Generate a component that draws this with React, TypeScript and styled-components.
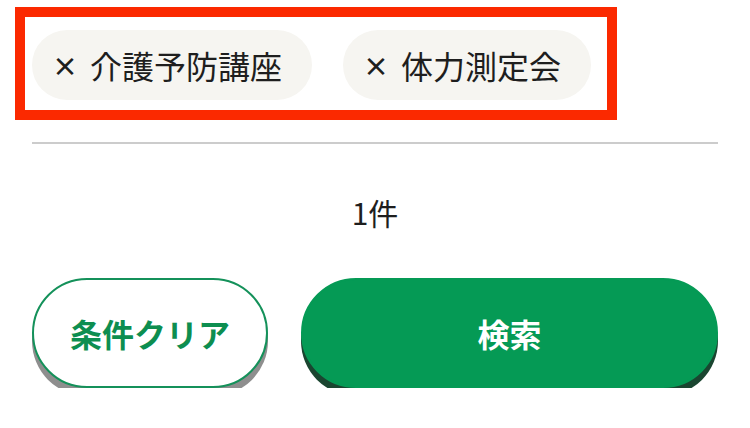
import { createGlobalStyle, styled } from "styled-components";

const GlobalStyle = createGlobalStyle`
  body {
    margin: 0;
    background: #fff;
    font-family: "Noto Sans CJK JP", "Noto Sans", sans-serif;
    color: #222;
  }
`;

const Page = styled.div`
  padding: 7px 32px 0;
`;

const ChipList = styled.ul`
  display: inline-flex;
  gap: 31px;
  list-style: none;
  margin: 0 0 0 -17px;
  padding: 13px 16px 10px 7px;
  border: 10px solid #fb2900;
`;

const Chip = styled.li`
  display: flex;
  align-items: center;
  height: 70px;
  padding: 0 30px 0 20px;
  border-radius: 35px;
  background: #f6f5f1;
  font-size: 32px;
  line-height: 1;
  color: #1e1e1e;
  white-space: nowrap;
`;

const Cross = styled.span`
  margin-right: 12px;
  font-size: 26px;
  font-weight: 700;
`;

const Divider = styled.hr`
  margin: 22px 0 0;
  border: 0;
  height: 2px;
  background: #cccccc;
`;

const Count = styled.p`
  margin: 48px 0 0;
  text-align: center;
  font-size: 30px;
  line-height: 40px;
  color: #1e1e1e;
`;

const Actions = styled.div`
  display: grid;
  grid-template-columns: 236px 1fr;
  gap: 33px;
  margin-top: 46px;
`;

const Button = styled.button<{ $primary?: boolean }>`
  height: 110px;
  border-radius: 55px;
  font-family: inherit;
  font-size: 32px;
  font-weight: 700;
  cursor: pointer;
  border: 2px solid ${(p) => (p.$primary ? "#059a55" : "#14915a")};
  background: ${(p) => (p.$primary ? "#059a55" : "#fff")};
  color: ${(p) => (p.$primary ? "#fff" : "#0d8e50")};
  box-shadow: 0 8px 0 ${(p) => (p.$primary ? "#1a4530" : "#8e8e8e")};
`;

const tags = ["介護予防講座", "体力測定会"];

const App = () => {
  return (
    <>
      <GlobalStyle />
      <Page>
        <ChipList>
          {tags.map((t) => (
            <Chip key={t}>
              <Cross>×</Cross>
              {t}
            </Chip>
          ))}
        </ChipList>
        <Divider />
        <Count>1件</Count>
        <Actions>
          <Button>条件クリア</Button>
          <Button $primary>検索</Button>
        </Actions>
      </Page>
    </>
  );
};

export default App;
